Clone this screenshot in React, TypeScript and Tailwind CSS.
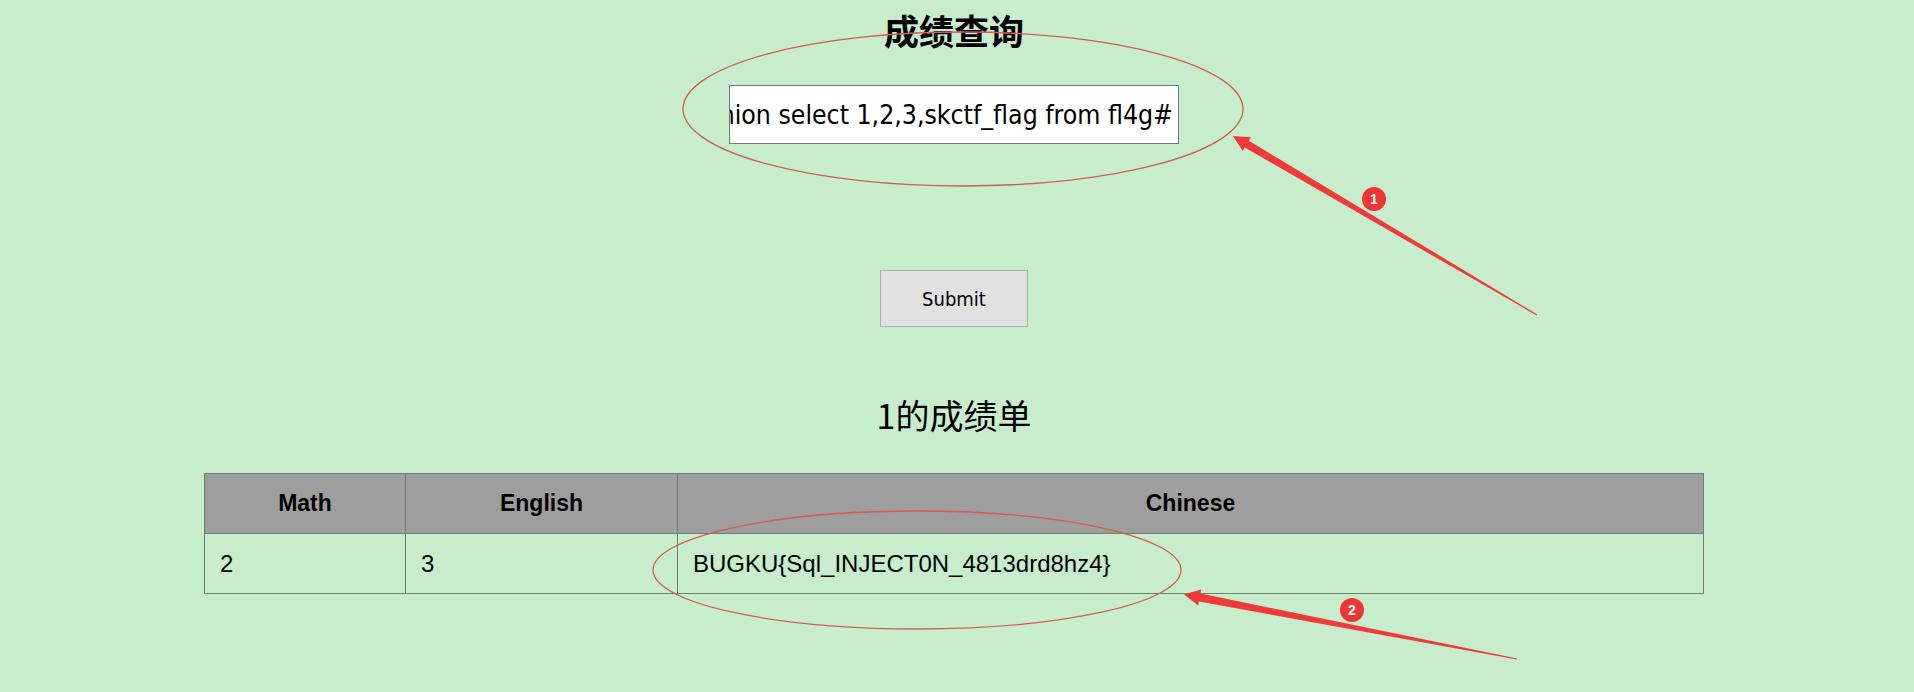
import React from 'react'

const scores = { math: '2', english: '3', chinese: 'BUGKU{Sql_INJECT0N_4813drd8hz4}' }

function Annotations() {
  return (
    <svg
      className="absolute left-0 top-0 pointer-events-none"
      width={1914}
      height={692}
      viewBox="0 0 1914 692"
    >
      <ellipse cx={963} cy={109} rx={280} ry={77} fill="none" stroke="#d65a52" strokeWidth={1.3} />
      <ellipse cx={917} cy={570} rx={264} ry={59} fill="none" stroke="#d65a52" strokeWidth={1.3} />

      <polygon
        fill="#f03a3a"
        points="1233,136 1250.9,137.2 1248.8,140.7 1537.3,314.5 1536.7,315.5 1244.8,147.5 1242.7,151"
      />
      <polygon
        fill="#f03a3a"
        points="1184,594.5 1201.2,589.6 1200.5,593.6 1517.1,658.4 1516.9,659.6 1198.9,601.4 1198.2,605.4"
      />

      <circle cx={1374} cy={199} r={12} fill="#ee3434" />
      <text x={1374} y={204} textAnchor="middle" fontSize={14} fontWeight={700} fill="#fff" fontFamily="Liberation Sans, sans-serif">
        1
      </text>
      <circle cx={1352} cy={610} r={12} fill="#ee3434" />
      <text x={1352} y={615} textAnchor="middle" fontSize={14} fontWeight={700} fill="#fff" fontFamily="Liberation Sans, sans-serif">
        2
      </text>
    </svg>
  )
}

export default function App() {
  return (
    <div className="relative w-[1914px] h-[692px] overflow-hidden bg-[#c7edcc]">
      <div className="w-[1908px] flex flex-col items-center">
        <h1 className="mt-[12px] text-[35px] leading-none font-bold text-black [font-family:'Noto_Sans_CJK_SC',sans-serif]">
          成绩查询
        </h1>

        <div className="mt-[38px] w-[450px] h-[59px] bg-white border border-[#767676] flex items-center justify-end overflow-hidden whitespace-nowrap pr-[5px]">
          <span className="text-[26.4px] text-black [font-family:'DejaVu_Sans_Condensed','DejaVu_Sans',sans-serif]">
            1' union select 1,2,3,skctf_flag from fl4g#
          </span>
        </div>

        <button className="mt-[126px] w-[148px] h-[57px] bg-[#e1e1e1] border border-[#adadad] text-[20px] text-black [font-family:'DejaVu_Sans_Condensed','DejaVu_Sans',sans-serif]">
          Submit
        </button>

        <h2 className="mt-[71px] text-[34px] leading-none font-normal text-black [font-family:'Noto_Sans_CJK_SC',sans-serif]">
          1的成绩单
        </h2>

        <table className="mt-[41px] w-[1500px] border-collapse [font-family:'Liberation_Sans',Arial,sans-serif] text-black">
          <thead>
            <tr className="h-[60px] bg-[#9e9e9e]">
              <th className="w-[201px] border border-[#6f7f6f] text-[23px] font-bold text-center">Math</th>
              <th className="w-[272px] border border-[#6f7f6f] text-[23px] font-bold text-center">English</th>
              <th className="border border-[#6f7f6f] text-[23px] font-bold text-center">Chinese</th>
            </tr>
          </thead>
          <tbody>
            <tr className="h-[60px]">
              <td className="border border-[#6f7f6f] pl-[15px] text-[24px]">{scores.math}</td>
              <td className="border border-[#6f7f6f] pl-[15px] text-[24px]">{scores.english}</td>
              <td className="border border-[#6f7f6f] pl-[15px] text-[24px]">{scores.chinese}</td>
            </tr>
          </tbody>
        </table>
      </div>
      <Annotations />
    </div>
  )
}
